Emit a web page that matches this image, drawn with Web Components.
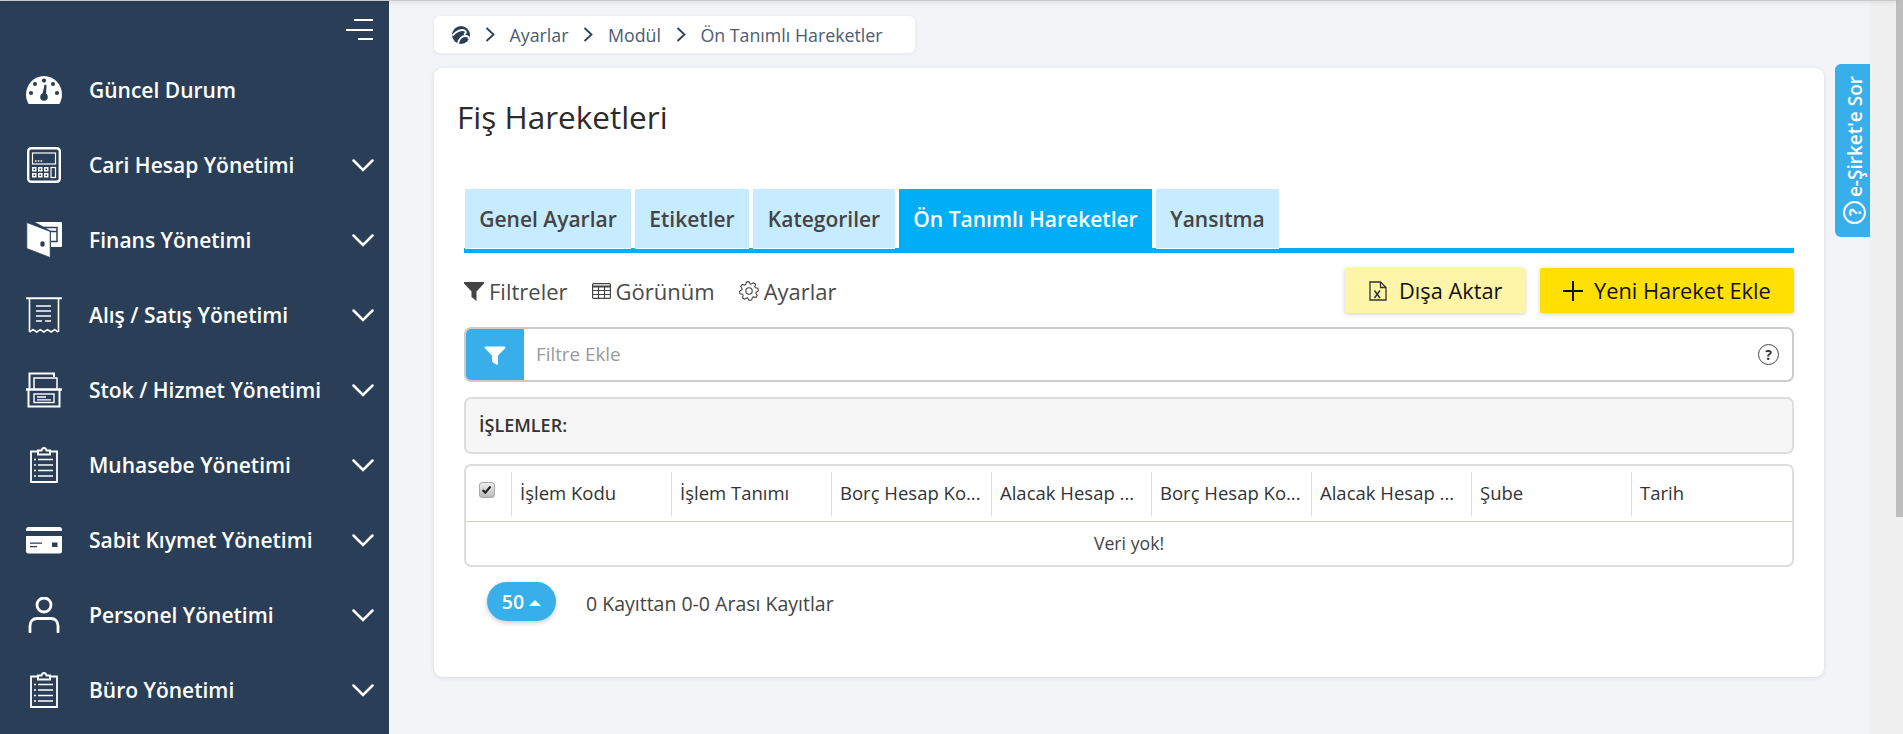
<!DOCTYPE html>
<html lang="tr">
<head>
<meta charset="utf-8">
<title>Fiş Hareketleri</title>
<style>
  html, body { margin: 0; height: 100%; overflow: hidden; }
  body { font-family: "Open Sans", "Liberation Sans", sans-serif; }
</style>
</head>
<body>
<app-shell>
  <side-nav slot="nav">
    <nav-item icon="gauge" label="Güncel Durum" flat></nav-item>
    <nav-item icon="calc" label="Cari Hesap Yönetimi"></nav-item>
    <nav-item icon="wallet" label="Finans Yönetimi"></nav-item>
    <nav-item icon="receipt" label="Alış / Satış Yönetimi"></nav-item>
    <nav-item icon="box" label="Stok / Hizmet Yönetimi"></nav-item>
    <nav-item icon="clip" label="Muhasebe Yönetimi"></nav-item>
    <nav-item icon="card" label="Sabit Kıymet Yönetimi"></nav-item>
    <nav-item icon="user" label="Personel Yönetimi"></nav-item>
    <nav-item icon="clip" label="Büro Yönetimi"></nav-item>
  </side-nav>
  <bread-crumb></bread-crumb>
  <page-card heading="Fiş Hareketleri">
    <tab-bar></tab-bar>
    <tool-bar></tool-bar>
    <filter-box></filter-box>
    <action-bar></action-bar>
    <data-table></data-table>
    <table-footer></table-footer>
  </page-card>
  <help-tab slot="help"></help-tab>
</app-shell>

<script>
const NAV_ICONS = {
  gauge: `<svg width="36" height="28" viewBox="0 0 36 28">
    <path fill="#fff" d="M2.6 28C1 25 0 22 0 18.5 0 8.500 8 0 18 0s18 8.500 18 18.500c0 3.500-1 6.500-2.600 9.500z"/>
    <g fill="#2a3f57"><circle cx="18" cy="4.600" r="2.100"/><circle cx="9" cy="8" r="2.100"/><circle cx="27" cy="8" r="2.100"/><circle cx="5" cy="17" r="2.100"/><circle cx="31" cy="17" r="2.100"/><circle cx="18" cy="21" r="3.800"/><path d="M16 20 18.600 8.500 20.500 9 20 21z"/></g>
  </svg>`,
  calc: `<svg width="34" height="36" viewBox="0 0 34 36" fill="none" stroke="#fff">
    <rect x="1.200" y="1.200" width="31.600" height="33.600" rx="3" stroke-width="2.400"/>
    <rect x="5.500" y="6" width="23" height="11" stroke-width="1.200"/>
    <path d="M8 14h1.500M10.800 14h1.500M13.600 14h1.500" stroke-width="1.400"/>
    <g fill="#fff" stroke="none"><path d="M5 20h4.500v4.500H5zM11 20h4.500v4.500H11zM17 20h4.500v4.500H17zM5 26h4.500v4.500H5zM11 26h4.500v4.500H11zM17 26h4.500v4.500H17z"/></g>
    <g fill="#2a3f57" stroke="none"><path d="M6.500 21.500H8V23H6.500zM12.500 21.500H14V23h-1.500zM18.500 21.500H20V23h-1.500zM6.500 27.500H8V29H6.500zM12.500 27.500H14V29h-1.500zM18.500 27.500H20V29h-1.500z"/></g>
    <rect x="24" y="20.500" width="4.500" height="10" stroke-width="1.200"/>
  </svg>`,
  wallet: `<svg width="36" height="36" viewBox="0 0 36 36">
    <path fill="#fff" d="M9 0h26a1 1 0 0 1 1 1v23a1 1 0 0 1-1 1H25V9z"/>
    <path fill="none" stroke="#2a3f57" stroke-width="1.500" d="M17 5.500h14v14h-6M24 9.500h7"/>
    <path fill="#fff" stroke="#2a3f57" stroke-width=".8" d="M.8.500 24.200 9.400v26.200L.8 26.500z"/>
    <ellipse cx="16.500" cy="22" rx="2.200" ry="2.800" fill="#2a3f57"/>
  </svg>`,
  receipt: `<svg width="36" height="36" viewBox="0 0 36 36" fill="none" stroke="#fff" stroke-width="1.600">
    <path stroke-width="2" d="M0 1.200h36"/>
    <path d="M3.500 1v34M32.500 1v34"/>
    <path d="M3.500 35l3.600-2.400 3.600 2.400 3.600-2.400 3.600 2.400 3.600-2.400 3.600 2.400 3.600-2.400 3.400 2.400"/>
    <path d="M10 9h15M10 14h15M10 19h15M10 24h6M19 24h6"/>
  </svg>`,
  box: `<svg width="36" height="36" viewBox="0 0 36 36" fill="none" stroke="#fff">
    <path stroke-width="2" d="M3.500 17V1.500H28V5"/>
    <path stroke-width="1.500" d="M8 17V6h23v11"/>
    <path stroke-width="2.400" d="M0 17.500h36"/>
    <path stroke-width="2" d="M2.500 17v17.500h31V17"/>
    <rect x="8" y="22" width="20" height="8.500" stroke-width="1.400"/>
    <path stroke-width="1.300" d="M11 25h9M11 27.800h14"/>
  </svg>`,
  clip: `<svg width="28" height="36" viewBox="0 0 28 36" fill="none" stroke="#fff">
    <path stroke-width="1.800" d="M8 4.500H1v30.500h26V4.500h-7"/>
    <path stroke-width="1.800" fill="#2a3f57" d="M8 7.500V3.500h3.500C12 1.500 13 1 14 1s2 .5 2.500 2.500H20v4z"/>
    <path stroke-width="1.700" d="M8 12.500h15M8 18h15M8 23.500h15M8 29h15M4 12.500h2M4 18h2M4 23.500h2M4 29h2"/>
  </svg>`,
  card: `<svg width="36" height="27" viewBox="0 0 36 27">
    <rect width="36" height="26.500" rx="2.500" fill="#fff"/>
    <path fill="#2a3f57" d="M0 4h36v5H0z"/>
    <path fill="#2a3f57" d="M4 15.500h12v1.200H4zM4 19h7v1.200H4zM26 15.500h5.500V20H26z"/>
  </svg>`,
  user: `<svg width="32" height="36" viewBox="0 0 32 36" fill="none" stroke="#fff" stroke-width="2.800" stroke-linecap="round">
    <circle cx="16" cy="8" r="7"/>
    <path d="M2 35v-6c0-5 3-7.500 7-7.500h14c4 0 7 2.500 7 7.500v6"/>
  </svg>`
};

class AppShell extends HTMLElement {
  constructor() {
    super();
    this.attachShadow({mode: 'open'});
    this.shadowRoot.innerHTML = `
      <style>
        :host { display: flex; height: 734px; background: #f0f0f0; }
        #page { flex: 1; min-width: 0; display: flex; flex-direction: column; }
        #topline { height: 1px; flex: none; background: #c9c9c9; box-shadow: 0 1px 4px rgba(0,0,0,0.3); position: relative; z-index: 2; }
        #row { flex: 1; display: flex; min-height: 0; }
        #main { position: relative; width: 1480px; flex: none; background: #f3f4f8; padding: 15px 45px 0; box-sizing: border-box; }
        #rail { width: 7px; flex: none; background: #f0f0f0; }
        #thumb { height: 517px; background: #bdbdbd; }
      </style>
      <div id="page">
        <div id="topline"></div>
        <div id="row">
          <slot name="nav"></slot>
          <div id="main"><slot></slot><slot name="help"></slot></div>
        </div>
      </div>
      <div id="rail"><div id="thumb"></div></div>`;
  }
}
customElements.define('app-shell', AppShell);

class SideNav extends HTMLElement {
  constructor() {
    super();
    this.attachShadow({mode: 'open'});
    this.shadowRoot.innerHTML = `
      <style>
        :host { display: block; width: 389px; flex: none; background: #2a3f57; }
        #burger { height: 51.5px; display: flex; flex-direction: column; align-items: flex-end; gap: 7.5px; padding: 18px 16px 0 0; box-sizing: border-box; }
        #burger i { display: block; height: 2px; background: #fff; }
      </style>
      <div id="burger"><i style="width:19px"></i><i style="width:27px"></i><i style="width:15px"></i></div>
      <slot></slot>`;
  }
}
customElements.define('side-nav', SideNav);

class NavItem extends HTMLElement {
  constructor() {
    super();
    this.attachShadow({mode: 'open'});
  }
  connectedCallback() {
    const arrow = this.hasAttribute('flat') ? '' : `<svg id="arrow" width="22" height="13" viewBox="0 0 22 13"><path d="M1.5 1.5 11 11l9.5-9.5" fill="none" stroke="#fff" stroke-width="2.500" stroke-linecap="round"/></svg>`;
    this.shadowRoot.innerHTML = `
      <style>
        :host { display: flex; align-items: center; height: 75px; color: #fff; font-size: 21px; font-weight: 600; }
        #icon { width: 36px; margin-left: 26px; margin-right: 27px; display: flex; justify-content: center; }
        svg { display: block; }
        #arrow { margin-left: auto; margin-right: 15px; }
      </style>
      <span id="icon">${NAV_ICONS[this.getAttribute('icon')]}</span>
      <span>${this.getAttribute('label')}</span>
      ${arrow}`;
  }
}
customElements.define('nav-item', NavItem);

class BreadCrumb extends HTMLElement {
  constructor() {
    super();
    this.attachShadow({mode: 'open'});
    const sep = `<svg width="10" height="15" viewBox="0 0 10 15"><path d="M1.5 1 8.5 7.5 1.5 14" fill="none" stroke="#2a3f57" stroke-width="1.800"/></svg>`;
    this.shadowRoot.innerHTML = `
      <style>
        :host { display: flex; align-items: center; width: 481px; height: 37px; background: #fff; border-radius: 6px; box-shadow: 0 1px 4px rgba(0,0,0,0.06); padding-left: 18px; box-sizing: border-box; color: #4c5b70; font-size: 17.8px; }
        svg { display: block; flex: none; }
        span { margin: 0 15px 0 14.5px; white-space: nowrap; }
        #home { margin-right: 15px; }
      </style>
      <svg id="home" width="18" height="18" viewBox="0 0 18 18">
        <circle cx="9" cy="9" r="9" fill="#2a3f57"/>
        <path d="M.5 9.500C4 5.500 9 3 12.500 4.500c2 1 1.500 3-.5 4M6 17.500C7 13 10 9.500 14 10c2.500.3 3 1.500 2.500 3" fill="none" stroke="#fff" stroke-width="1.900"/>
      </svg>
      ${sep}<span>Ayarlar</span>${sep}<span>Modül</span>${sep}<span>Ön Tanımlı Hareketler</span>`;
  }
}
customElements.define('bread-crumb', BreadCrumb);

class PageCard extends HTMLElement {
  constructor() {
    super();
    this.attachShadow({mode: 'open'});
  }
  connectedCallback() {
    this.shadowRoot.innerHTML = `
      <style>
        :host { display: block; height: 609px; margin-top: 15px; background: #fff; border-radius: 9px; box-shadow: 0 1px 5px rgba(0,0,0,0.1); padding: 27px 30px 0; box-sizing: border-box; }
        h1 { margin: 0 0 0 -7px; font-size: 31.5px; font-weight: 400; line-height: 44px; color: #2b2b2b; }
      </style>
      <h1>${this.getAttribute('heading')}</h1>
      <slot></slot>`;
  }
}
customElements.define('page-card', PageCard);

class TabBar extends HTMLElement {
  constructor() {
    super();
    this.attachShadow({mode: 'open'});
    this.shadowRoot.innerHTML = `
      <style>
        :host { display: flex; gap: 4px; height: 59px; margin-top: 50px; padding-left: 1px; border-bottom: 5px solid #00aef7; }
        div { height: 59px; box-sizing: content-box; background: #c7ebff; border-bottom: 1px solid #fff; color: #444; font-size: 21px; font-weight: 600; line-height: 60px; text-align: center; padding: 0; white-space: nowrap; }
        .on { background: #00aef7; border-bottom-color: #00aef7; color: #fff; }
      </style>
      <div style="width:166px">Genel Ayarlar</div>
      <div style="width:114px">Etiketler</div>
      <div style="width:142px">Kategoriler</div>
      <div style="width:253px" class="on">Ön Tanımlı Hareketler</div>
      <div style="width:123px">Yansıtma</div>`;
  }
}
customElements.define('tab-bar', TabBar);

function gearPath() {
  let d = '';
  for (let i = 0; i < 8; i++) {
    const a = i * Math.PI / 4 - Math.PI / 8;
    const pts = [[7.2, a - 0.08], [9.4, a + 0.1], [9.4, a + 0.38], [7.2, a + 0.56]];
    for (const [r, t] of pts) d += (d ? 'L' : 'M') + (10 + r * Math.cos(t)).toFixed(2) + ' ' + (10 + r * Math.sin(t)).toFixed(2);
  }
  return d + 'Z';
}

class ToolBar extends HTMLElement {
  constructor() {
    super();
    this.attachShadow({mode: 'open'});
    this.shadowRoot.innerHTML = `
      <style>
        :host { display: flex; align-items: center; height: 45px; margin-top: 15px; color: #4a4a4a; font-size: 22px; }
        a { display: flex; align-items: center; gap: 5px; }
        svg { display: block; flex: none; }
        .btn { height: 45px; box-sizing: border-box; display: flex; align-items: center; color: #111; font-size: 21.8px; font-weight: 500; border-radius: 2px; box-shadow: 0 1px 4px rgba(0,0,0,0.2); }
        #export { margin-left: auto; width: 180px; background: #fff5a8; padding-left: 24px; gap: 12px; }
        #add { margin-left: 15px; width: 254px; background: #ffe000; padding-left: 23px; gap: 11px; }
      </style>
      <a><svg width="20" height="20" viewBox="0 0 20 20"><path fill="#444" d="M0 1h20v1.500l-7.500 8V20L7.500 16v-5.500L0 2.500z"/></svg>Filtreler</a>
      <a style="margin-left:24px"><svg width="19" height="16" viewBox="0 0 19 16" fill="none" stroke="#444" stroke-width="1.200"><rect x=".6" y=".6" width="17.800" height="14.800" rx="1"/><path stroke-width="2" d="M.6 3.500h17.800"/><path d="M.6 7.500h17.800M.6 11.500h17.800M6.500 3.500v12M12.500 3.500v12"/></svg>Görünüm</a>
      <a style="margin-left:24px"><svg width="20" height="20" viewBox="0 0 20 20" fill="none" stroke="#444" stroke-width="1.100" stroke-linejoin="round"><path d="${gearPath()}"/><circle cx="10" cy="10" r="3.200"/></svg>Ayarlar</a>
      <a class="btn" id="export"><svg width="18" height="20" viewBox="0 0 18 20" fill="none" stroke="#333" stroke-width="1.300"><path d="M1 1h10.500L17 6.500V19H1z"/><path d="M11.500 1v5.500H17"/><path stroke-width="1.500" d="M5.500 9.500l5.500 7.500M11 9.500 5.500 17"/></svg>Dışa Aktar</a>
      <a class="btn" id="add"><svg width="20" height="20" viewBox="0 0 20 20"><path d="M10 0v20M0 10h20" stroke="#111" stroke-width="2"/></svg>Yeni Hareket Ekle</a>`;
  }
}
customElements.define('tool-bar', ToolBar);

class FilterBox extends HTMLElement {
  constructor() {
    super();
    this.attachShadow({mode: 'open'});
    this.shadowRoot.innerHTML = `
      <style>
        :host { display: flex; align-items: center; height: 55px; margin-top: 14px; border: 2px solid #ccc; border-radius: 7px; box-sizing: border-box; overflow: hidden; color: #999; font-size: 18.8px; }
        #btn { width: 58px; height: 100%; background: #38aeeb; display: flex; align-items: center; justify-content: center; flex: none; }
        #ph { margin: 0 0 2px 12px; flex: 1; }
        #help { width: 19px; height: 19px; border: 1.5px solid #444; border-radius: 50%; color: #333; font-size: 14px; font-weight: 700; line-height: 19px; text-align: center; margin-right: 13px; }
      </style>
      <div id="btn"><svg width="22" height="22" viewBox="0 0 22 22"><path fill="#fff" d="M1.500 2.500h19a1 1 0 0 1 .7 1.700L14 11.500v8a1.200 1.200 0 0 1-1.800 1L9 18.500c-.6-.4-1-1-1-1.700v-5.300L.8 4.200a1 1 0 0 1 .7-1.700z"/></svg></div>
      <span id="ph">Filtre Ekle</span>
      <span id="help">?</span>`;
  }
}
customElements.define('filter-box', FilterBox);

class ActionBar extends HTMLElement {
  constructor() {
    super();
    this.attachShadow({mode: 'open'});
    this.shadowRoot.innerHTML = `
      <style>
        :host { display: flex; align-items: center; height: 57px; margin-top: 15px; border: 2px solid #ddd; border-radius: 7px; box-sizing: border-box; background: #f6f6f6; padding: 0 0 2px 13px; color: #333; font-size: 18px; font-weight: 600; }
      </style>
      İŞLEMLER:`;
  }
}
customElements.define('action-bar', ActionBar);

class DataTable extends HTMLElement {
  constructor() {
    super();
    this.attachShadow({mode: 'open'});
    const cols = ['İşlem Kodu', 'İşlem Tanımı', 'Borç Hesap Ko...', 'Alacak Hesap ...', 'Borç Hesap Ko...', 'Alacak Hesap ...', 'Şube', 'Tarih'];
    this.shadowRoot.innerHTML = `
      <style>
        :host { display: block; height: 103px; margin-top: 10px; border: 2px solid #ddd; border-radius: 7px; box-sizing: border-box; color: #333; font-size: 18.5px; }
        #head { display: grid; grid-template-columns: 45px repeat(8, 160px); height: 55px; border-bottom: 1px solid #cfcdc4; box-sizing: content-box; padding-top: 0; }
        #head div { margin-top: 6px; height: 44px; line-height: 42px; padding: 0 0 0 8px; border-left: 1px solid #ddd; box-sizing: border-box; white-space: nowrap; font-weight: 500; }
        #head #check { border-left: 0; padding: 10px 0 0 13px; line-height: 0; }
        #box { display: block; width: 16px; height: 16px; border-radius: 3px; background: linear-gradient(#eee, #bbb); border: 1px solid #aaa; box-sizing: border-box; }
        #empty { text-align: center; line-height: 42px; color: #444; font-size: 17.7px; }
      </style>
      <div id="head">
        <div id="check"><svg id="box" viewBox="0 0 16 16"><path d="M3 8l3 3 6-7" fill="none" stroke="#222" stroke-width="2.400"/></svg></div>
        ${cols.map(c => `<div>${c}</div>`).join('')}
      </div>
      <div id="empty">Veri yok!</div>`;
  }
}
customElements.define('data-table', DataTable);

class TableFooter extends HTMLElement {
  constructor() {
    super();
    this.attachShadow({mode: 'open'});
    this.shadowRoot.innerHTML = `
      <style>
        :host { display: flex; align-items: center; height: 39px; margin-top: 15px; padding-left: 23px; color: #444; font-size: 19.5px; }
        #size { width: 69px; height: 39px; border-radius: 20px; background: #38aeeb; box-shadow: 0 2px 5px rgba(0,0,0,0.2); color: #fff; font-size: 19.5px; font-weight: 600; display: flex; align-items: center; justify-content: center; gap: 5px; }
        #size i { width: 0; height: 0; border: 6px solid transparent; border-top: 0; border-bottom: 6px solid #fff; margin-top: 2px; }
        #text { margin-left: 30px; margin-top: 4px; }
      </style>
      <div id="size">50<i></i></div>
      <div id="text">0 Kayıttan 0-0 Arası Kayıtlar</div>`;
  }
}
customElements.define('table-footer', TableFooter);

class HelpTab extends HTMLElement {
  constructor() {
    super();
    this.attachShadow({mode: 'open'});
    this.shadowRoot.innerHTML = `
      <style>
        :host { position: absolute; right: -1px; top: 63px; width: 35px; height: 173px; background: #38aeeb; border-radius: 6px 0 0 6px; display: flex; align-items: center; justify-content: center; }
        #in { writing-mode: vertical-rl; transform: rotate(180deg); display: flex; align-items: center; gap: 4px; color: #fff; font-size: 19px; font-weight: 600; white-space: nowrap; margin-left: 4px; }
        #q { flex: none; width: 19px; height: 19px; border: 2.5px solid #fff; border-radius: 50%; text-align: center; line-height: 19px; font-weight: 700; font-size: 16px; }
      </style>
      <div id="in"><span id="q">?</span><span>e-Şirket'e Sor</span></div>`;
  }
}
customElements.define('help-tab', HelpTab);
</script>
</body>
</html>
